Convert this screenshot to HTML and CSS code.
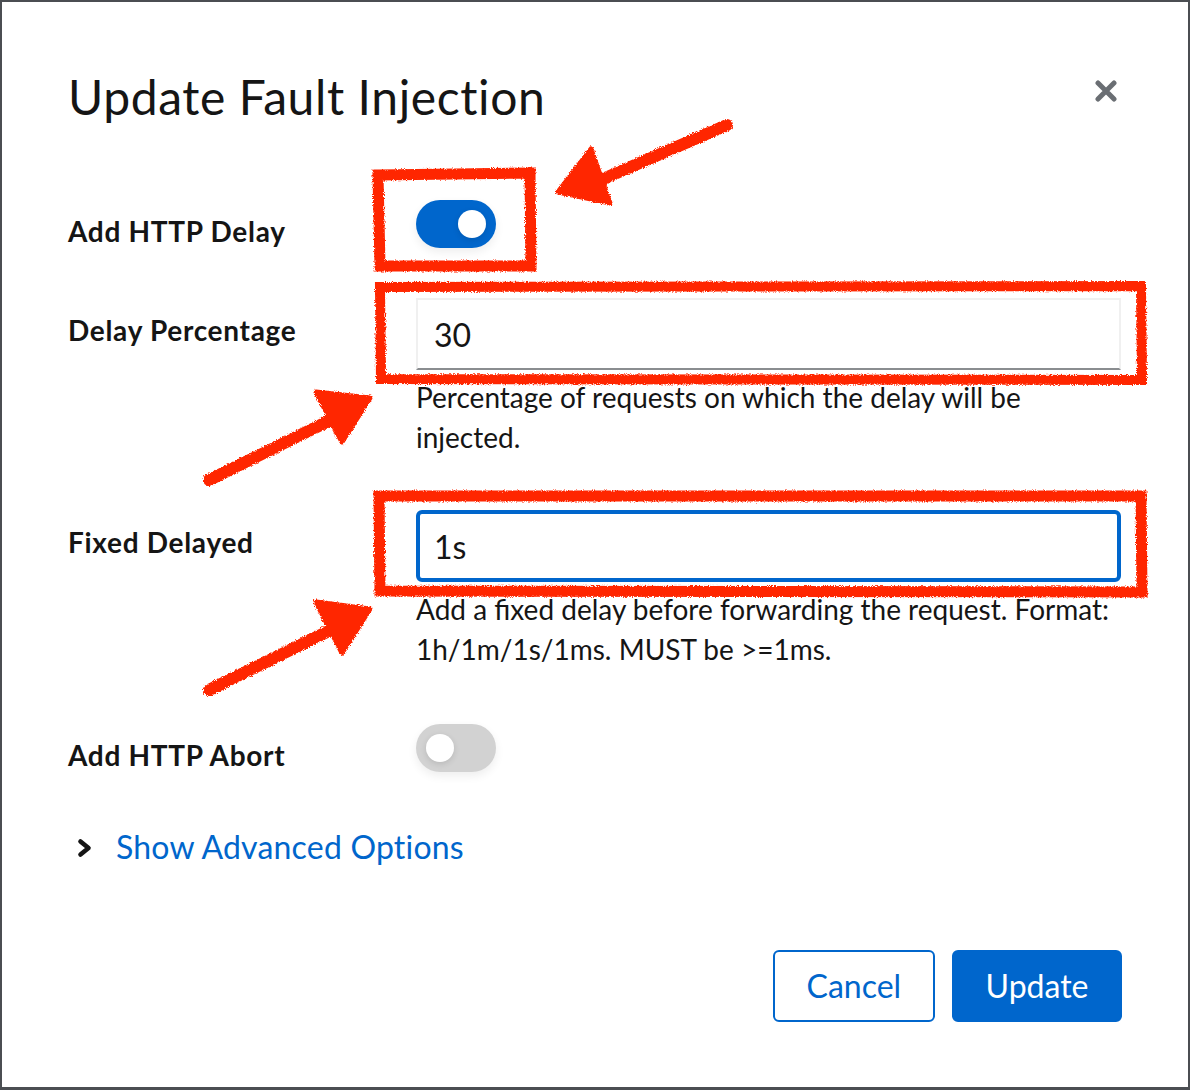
FILE: index.html
```html
<!DOCTYPE html>
<html lang="en">
<head>
<meta charset="utf-8">
<title>Update Fault Injection</title>
<link rel="stylesheet" href="styles.css">
</head>
<body>
<div class="modal">
  <header class="modal-header">
    <h1 class="title">Update Fault Injection</h1>
    <button class="close" aria-label="Close">
      <svg width="22" height="22" viewBox="0 0 22 22"><path d="M3 3 L19 19 M19 3 L3 19" stroke="#6a6e73" stroke-width="5" stroke-linecap="round" fill="none"/></svg>
    </button>
  </header>

  <form class="form">
    <div class="group g-delay">
      <label class="label">Add HTTP Delay</label>
      <div class="control"><span class="switch on"><span class="knob"></span></span></div>
    </div>
    <div class="group g-percent">
      <label class="label">Delay Percentage</label>
      <div class="control">
        <input class="input" type="text" value="30" readonly>
        <p class="help">Percentage of requests on which the delay will be<br>injected.</p>
      </div>
    </div>
    <div class="group g-fixed">
      <label class="label">Fixed Delayed</label>
      <div class="control">
        <input class="input focused" type="text" value="1s" readonly>
        <p class="help">Add a fixed delay before forwarding the request. Format:<br>1h/1m/1s/1ms. MUST be &gt;=1ms.</p>
      </div>
    </div>
    <div class="group g-abort">
      <label class="label">Add HTTP Abort</label>
      <div class="control"><span class="switch off"><span class="knob"></span></span></div>
    </div>
  </form>

  <div class="expand">
    <svg class="chev" width="16" height="20" viewBox="0 0 16 20"><path d="M3.5 3.5 L11.5 10 L3.5 16.5" stroke="#151515" stroke-width="4.6" stroke-linecap="round" stroke-linejoin="round" fill="none"/></svg>
    <a class="link" href="#">Show Advanced Options</a>
  </div>

  <footer class="footer">
    <button class="btn secondary">Cancel</button>
    <button class="btn primary">Update</button>
  </footer>

  <svg class="annot" width="1190" height="1090" viewBox="0 0 1190 1090">
    <defs>
      <filter id="crayon" x="-5%" y="-5%" width="110%" height="110%">
        <feTurbulence type="fractalNoise" baseFrequency="0.9" numOctaves="2" seed="3" result="n"/>
        <feDisplacementMap in="SourceGraphic" in2="n" scale="4" xChannelSelector="R" yChannelSelector="G"/>
      </filter>
    </defs>
    <g filter="url(#crayon)" fill="none" stroke="#ff2600" stroke-linejoin="miter" stroke-linecap="square">
      <path d="M378 175 L530 173 L531 266 L380 266 Z" stroke-width="11"/>
      <path d="M380 287 L1141 286 L1142 380 L381 379 Z" stroke-width="10"/>
      <path d="M379 496 L1141 496 L1142 592 L380 591 Z" stroke-width="11"/>
      <g stroke-linecap="round">
        <path d="M727 125 L596 182" stroke-width="12"/>
        <path d="M209 480 L345 413" stroke-width="12"/>
        <path d="M209 690 L345 623" stroke-width="12"/>
      </g>
    </g>
    <g filter="url(#crayon)" fill="#ff2600" stroke="#ff2600" stroke-width="5" stroke-linejoin="round">
      <polygon points="558,192 591,149 610,203"/>
      <polygon points="316,392 370,398 342,442"/>
      <polygon points="316,602 370,609 342,653"/>
    </g>
  </svg>
</div>
</body>
</html>
```

FILE: styles.css
```css
* { box-sizing: border-box; }

html, body {
  margin: 0;
  padding: 0;
  background: #ffffff;
}

body {
  font-family: Lato, "Open Sans", "Liberation Sans", sans-serif;
  color: #151515;
}

.modal {
  position: relative;
  width: 1190px;
  height: 1090px;
  border: 2px solid #4b4e52;
  border-bottom-width: 3px;
  background: #ffffff;
  padding: 66px 66px 65px 66px;
  display: flex;
  flex-direction: column;
}

.modal-header {
  display: flex;
  justify-content: space-between;
  align-items: flex-start;
}

.title {
  margin: 0;
  font-size: 48px;
  line-height: 58px;
  font-weight: 400;
  letter-spacing: 0.6px;
  color: #151515;
}

.close {
  border: 0;
  background: none;
  padding: 0;
  margin: 12px 5px 0 0;
  width: 22px;
  height: 22px;
  line-height: 0;
}

.form {
  margin: 0;
}

.group {
  display: grid;
  grid-template-columns: 348px 705px;
  align-items: start;
}

.g-delay { margin-top: 74px; }
.g-percent { margin-top: 50px; }
.g-fixed { margin-top: 53px; }
.g-abort { margin-top: 55px; }

.label {
  font-size: 28px;
  line-height: 42px;
  height: 48px;
  font-weight: 700;
  letter-spacing: 0.7px;
  padding-top: 10px;
  color: #151515;
}

.g-percent .label,
.g-fixed .label {
  padding-top: 11px;
}

.control {
  display: flex;
  flex-direction: column;
  align-items: flex-start;
}

.switch {
  position: relative;
  display: block;
  width: 80px;
  height: 48px;
  border-radius: 24px;
  box-shadow: 0 4px 10px rgba(0, 0, 0, 0.07);
}

.switch.on { background: #0066cc; }
.switch.off { background: #d2d2d2; }

.knob {
  position: absolute;
  top: 10px;
  width: 28px;
  height: 28px;
  border-radius: 50%;
  background: #ffffff;
  box-shadow: 0 2px 6px rgba(0, 0, 0, 0.12);
}

.switch.on .knob { left: 42px; }
.switch.off .knob { left: 10px; }

.input {
  display: block;
  width: 705px;
  height: 72px;
  margin: 0;
  padding: 0 16px;
  border: 2px solid #f0f0f0;
  border-bottom-color: #8a8d90;
  border-radius: 0;
  background: #ffffff;
  font-family: Lato, "Open Sans", "Liberation Sans", sans-serif;
  font-size: 32px;
  color: #151515;
  outline: none;
}

.input.focused {
  border: 4px solid #0066cc;
  border-radius: 6px;
  padding: 0 14px;
}

.help {
  margin: 7px 0 0 0;
  font-size: 28px;
  line-height: 40px;
  white-space: nowrap;
  color: #151515;
}

.expand {
  margin-top: 51px;
  display: flex;
  align-items: center;
  height: 48px;
  padding-left: 9px;
}

.chev {
  display: block;
  margin-top: 2px;
}

.link {
  margin-left: 23px;
  font-size: 32px;
  line-height: 48px;
  letter-spacing: 0.2px;
  color: #0066cc;
  text-decoration: none;
}

.footer {
  margin-top: auto;
  display: flex;
  justify-content: flex-end;
  gap: 17px;
}

.btn {
  height: 72px;
  padding: 0 32px;
  border: 2px solid #0066cc;
  border-radius: 6px;
  font-family: Lato, "Open Sans", "Liberation Sans", sans-serif;
  font-size: 32px;
  line-height: 1;
}

.btn.secondary {
  background: #ffffff;
  color: #0066cc;
}

.btn.primary {
  background: #0066cc;
  color: #ffffff;
  padding: 0 31.5px;
}

.annot {
  position: absolute;
  left: -2px;
  top: -2px;
  pointer-events: none;
}
```
